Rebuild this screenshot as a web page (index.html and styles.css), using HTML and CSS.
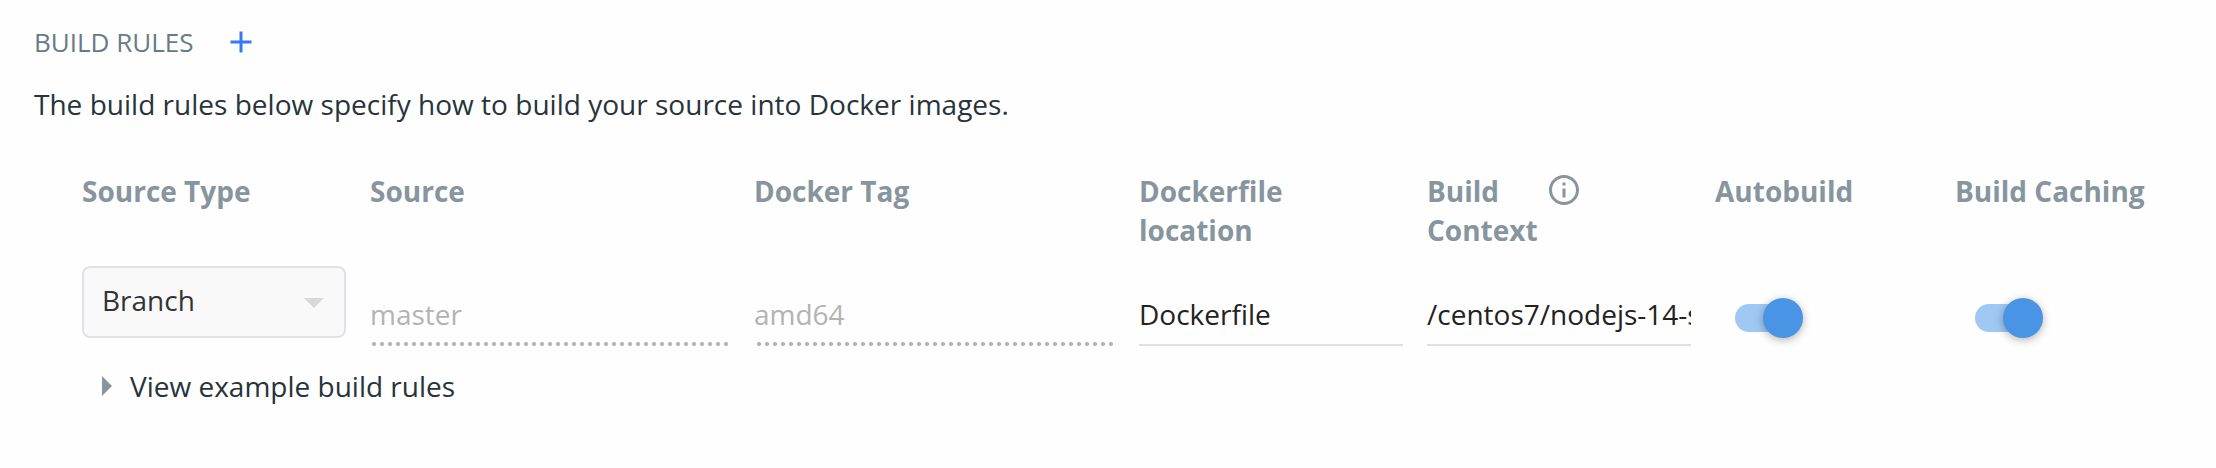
FILE: index.html
```html
<!DOCTYPE html>
<html lang="en">
<head>
<meta charset="utf-8">
<title>Build Rules</title>
<link rel="stylesheet" href="styles.css">
</head>
<body>
<main class="panel">
  <header class="heading">
    <h1 class="title">BUILD RULES</h1>
    <svg class="add" viewBox="0 0 24 24"><path d="M19 13h-6v6h-2v-6H5v-2h6V5h2v6h6z"/></svg>
  </header>
  <p class="description">The build rules below specify how to build your source into Docker images.</p>
  <section class="rules">
    <div class="label">Source Type</div>
    <div class="label">Source</div>
    <div class="label">Docker Tag</div>
    <div class="label">Dockerfile location</div>
    <div class="label with-icon"><span class="context">Build Context</span>
      <svg class="info" viewBox="0 0 24 24"><path d="M11 17h2v-6h-2v6zm1-15C6.48 2 2 6.48 2 12s4.48 10 10 10 10-4.48 10-10S17.52 2 12 2zm0 18c-4.41 0-8-3.590-8-8s3.590-8 8-8 8 3.590 8 8-3.590 8-8 8zM11 9h2V7h-2v2z"/></svg>
    </div>
    <div class="label">Autobuild</div>
    <div class="label">Build Caching</div>

    <div class="select"><span>Branch</span><svg class="caret" viewBox="0 0 20 10"><path d="M0 0h20L10 10z"/></svg></div>
    <div class="field disabled source">master</div>
    <div class="field disabled tag">amd64</div>
    <div class="field">Dockerfile</div>
    <div class="field">/centos7/nodejs-14-s2i</div>
    <div class="toggle"><span class="thumb"></span></div>
    <div class="toggle"><span class="thumb"></span></div>
  </section>
  <div class="examples"><svg class="arrow" viewBox="0 0 10 20"><path d="M0 0l10 10L0 20z"/></svg><span>View example build rules</span></div>
</main>
</body>
</html>
```
FILE: styles.css
```css
body {
  margin: 0;
  background: #fefefe;
  color: #27343b;
  font: 28px/39px "Open Sans", "Noto Sans", sans-serif;
}
.panel {
  padding: 24px 34px 0;
}
.heading {
  display: flex;
  align-items: center;
  gap: 30px;
  height: 36px;
}
.title {
  margin: 0;
  font-size: 26px;
  font-weight: 400;
  line-height: 36px;
  color: #677b87;
}
.add {
  width: 36px;
  height: 36px;
  fill: #337af7;
}
.description {
  margin: 25px 0 0;
  letter-spacing: 0.015px;
}
.rules {
  display: grid;
  grid-template-columns: 264px 360px 361px 264px 264px 216px 216px;
  grid-template-rows: 78px 80px;
  column-gap: 24px;
  row-gap: 16px;
  padding: 48px 0 0 48px;
}
.label {
  font-weight: 700;
  color: #86959e;
}
.with-icon {
  display: flex;
  align-items: flex-start;
}
.context {
  width: 119px;
}
.info {
  width: 36px;
  height: 36px;
  fill: #86959e;
}
.select {
  display: flex;
  justify-content: space-between;
  box-sizing: border-box;
  width: 264px;
  height: 72px;
  padding: 13px 20px 0 18px;
  border: 2px solid #dfe3e8;
  border-radius: 8px;
  background: #f9f9f9;
  color: #333;
}
.caret {
  width: 20px;
  height: 10px;
  margin-top: 17px;
  fill: #d8d8d8;
}
.field {
  box-sizing: border-box;
  height: 80px;
  padding-top: 29px;
  border-bottom: 2px solid #e0e0e0;
  color: #222;
  overflow: hidden;
  white-space: nowrap;
}
.disabled {
  border-bottom: 0;
  color: #b3b3b3;
  background: radial-gradient(circle, #b3b3b3 1.8px, transparent 2.3px) 0 76px / 8px 4px repeat-x;
}
.source {
  width: 359px;
}
.tag {
  width: 360px;
  background-position-x: 1px;
}
.toggle {
  display: flex;
  align-items: center;
  justify-content: flex-end;
  width: 64px;
  height: 28px;
  margin: 38px 0 0 20px;
  border-radius: 14px;
  background: #9fc8f3;
}
.thumb {
  flex: none;
  width: 40px;
  height: 40px;
  margin-right: -4px;
  border-radius: 50%;
  background: #4a94e6;
  box-shadow: 0 2px 9px rgba(0, 0, 0, .3);
}
.examples {
  display: flex;
  align-items: center;
  gap: 18px;
  margin: 21px 0 0 68px;
}
.arrow {
  width: 10px;
  height: 20px;
  margin-top: -2px;
  fill: #86959e;
}
```
